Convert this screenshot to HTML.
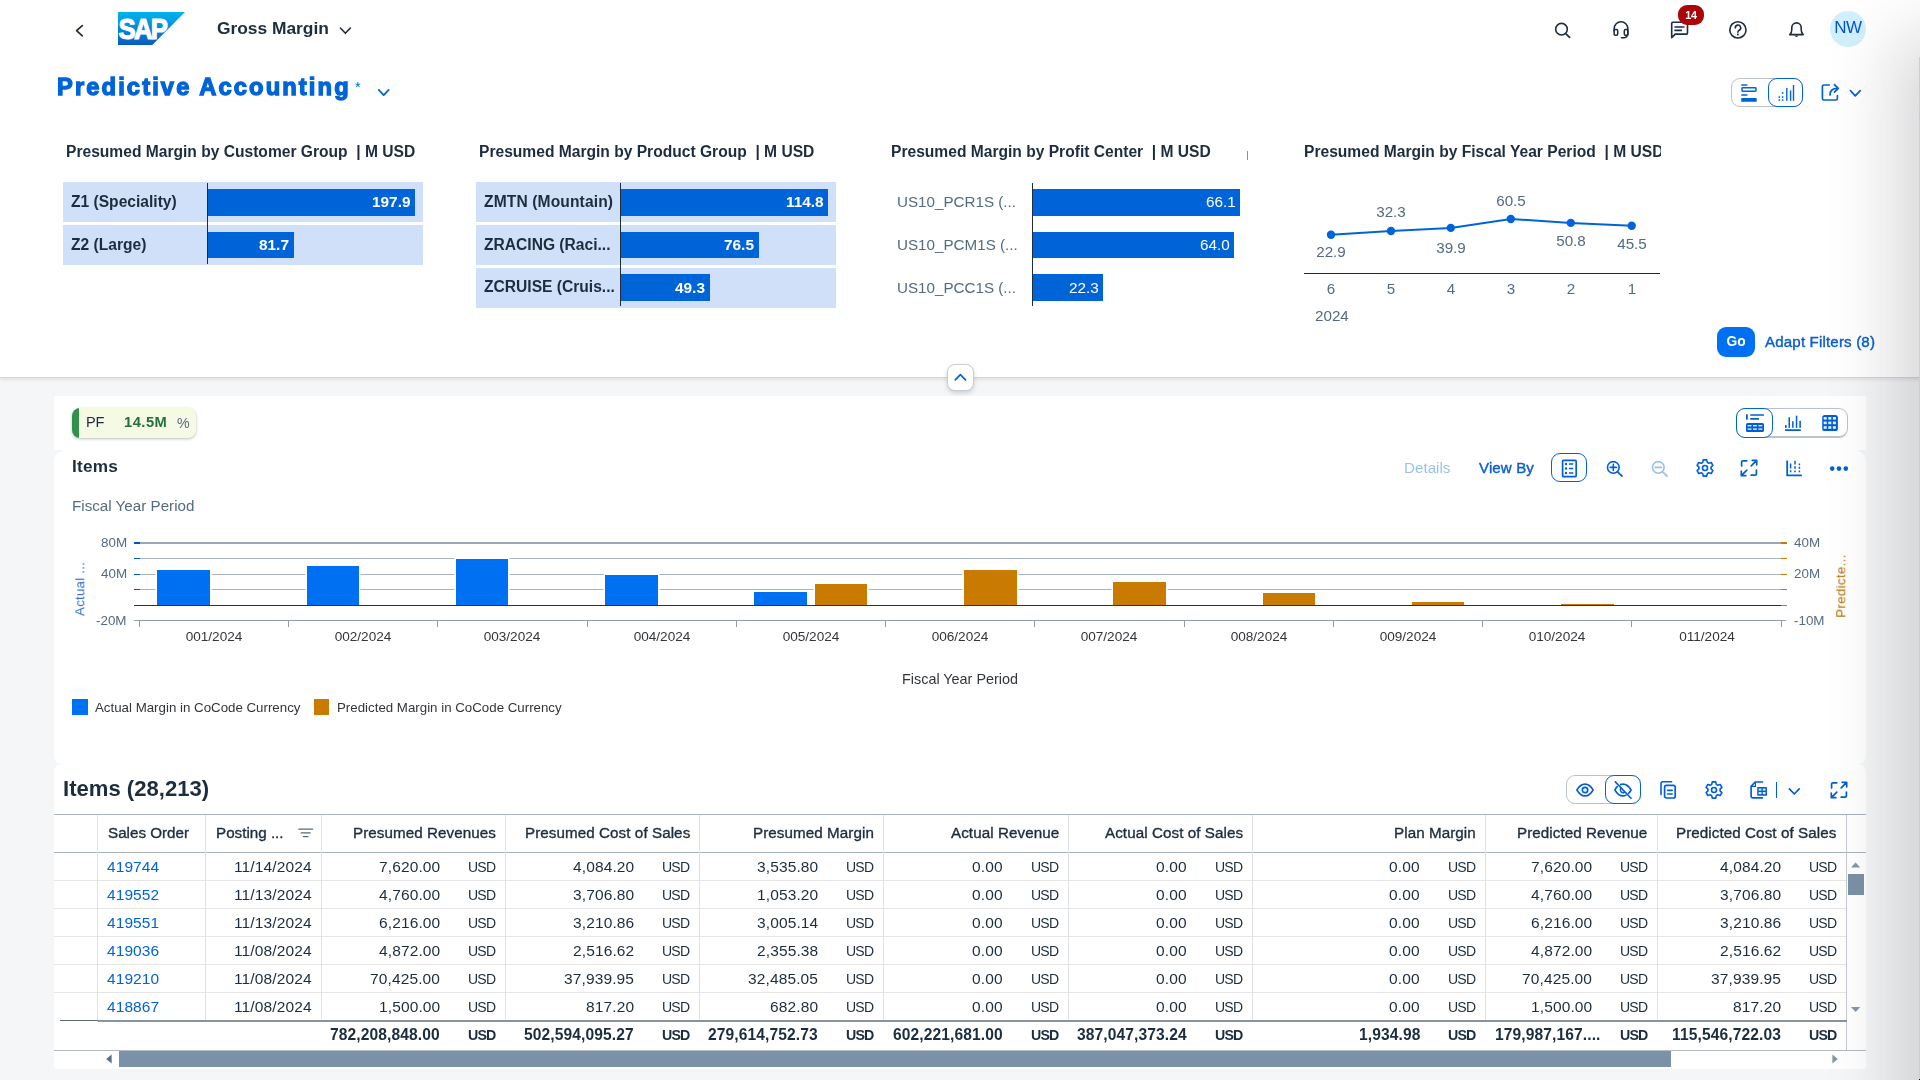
<!DOCTYPE html>
<html lang="en"><head><meta charset="utf-8"><title>Predictive Accounting</title>
<style>
*{box-sizing:border-box;margin:0;padding:0}
html,body{width:1920px;height:1080px;overflow:hidden;background:#f5f6f7;font-family:"Liberation Sans",sans-serif;color:#1d2d3e}
#root{position:relative;width:1920px;height:1080px;overflow:hidden;background:#f5f6f7}
.abs{position:absolute}
.t{position:absolute;white-space:pre;line-height:1;will-change:transform}
.b{font-weight:bold}
svg{position:absolute;overflow:visible}
.hdr{position:absolute;left:0;top:0;width:1920px;height:378px;background:#fff;border-bottom:1px solid #d3d6d9;box-shadow:0 2px 3px rgba(90,100,110,.13)}
.card{position:absolute;background:#fff}
.seg{position:absolute;border:1px solid #bcc3ca;border-radius:9px;background:#fff}
.sel{position:absolute;border:1px solid #0064d9;border-radius:9px;background:#fff}
.rowbg{position:absolute;background:#cfe0f8}
.bar{position:absolute;background:#0064d9}
.axis{position:absolute;background:#1d2d3e}
.mt{font-size:15.6px;font-weight:bold;color:#1d2d3e}
.lab{font-size:15.6px;font-weight:bold;color:#1d2d3e}
.labg{font-size:15.2px;color:#556b82}
.val{font-size:15.4px;font-weight:bold;color:#fff;text-align:right}
.valn{font-size:15.3px;color:#fff;text-align:right}
.g{color:#556b82}
</style></head>
<body><div id="root">
<div class="hdr"></div>
<svg style="left:72px;top:22px" width="16" height="16" viewBox="0 0 16 16"><path d="M10.3 3.6 L4.6 8.7 L10.3 13.8" fill="none" stroke="#1d2d3e" stroke-width="1.7" stroke-linecap="round" stroke-linejoin="round"/></svg>
<svg style="left:118px;top:12px" width="67" height="33" viewBox="0 0 67 33"><defs><linearGradient id="sapg" x1="0" y1="0" x2="0" y2="1"><stop offset="0" stop-color="#00b4f0"/><stop offset="0.25" stop-color="#019fe3"/><stop offset="1" stop-color="#0a5cbc"/></linearGradient></defs><polygon points="0,0 67,0 34.3,33 0,33" fill="url(#sapg)"/><text x="0.6" y="26.6" font-family="Liberation Sans" font-weight="bold" font-size="28.6" fill="#fff" stroke="#fff" stroke-width="1.1" textLength="47.5" lengthAdjust="spacingAndGlyphs" letter-spacing="-2">SAP</text></svg>
<div class="t b" style="left:217.40px;top:19.97px;font-size:17.4px;letter-spacing:-.02px">Gross Margin</div>
<svg style="left:338px;top:24px" width="14" height="14" viewBox="0 0 14 14"><path d="M2.4 4 L7.4 9.3 L12.4 4" fill="none" stroke="#1d2d3e" stroke-width="1.6" stroke-linecap="round" stroke-linejoin="round"/></svg>
<svg style="left:1553px;top:21px" width="18" height="18" viewBox="0 0 18 18"><circle cx="8.5" cy="8.2" r="5.8" fill="none" stroke="#1d2d3e" stroke-width="1.6"/><path d="M12.9 12.8 L16.6 16.4" stroke="#1d2d3e" stroke-width="1.7" stroke-linecap="round"/></svg>
<svg style="left:1612px;top:20px" width="18" height="20" viewBox="0 0 18 20"><path d="M2.2 11 V8.5 A6.8 6.8 0 0 1 15.8 8.5 V13.5 A4 4 0 0 1 11.8 17.8 H9.4" fill="none" stroke="#1d2d3e" stroke-width="1.6" stroke-linecap="round"/><rect x="2.1" y="9.6" width="3.6" height="5.6" rx="1.2" fill="none" stroke="#1d2d3e" stroke-width="1.5"/><rect x="12.3" y="9.6" width="3.6" height="5.6" rx="1.2" fill="none" stroke="#1d2d3e" stroke-width="1.5"/></svg>
<svg style="left:1670px;top:20px" width="20" height="20" viewBox="0 0 20 20"><path d="M1.7 17.6 V3.4 A1.2 1.2 0 0 1 2.9 2.2 H16.3 A1.2 1.2 0 0 1 17.5 3.4 V12.9 A1.2 1.2 0 0 1 16.3 14.1 H5.2 Z" fill="none" stroke="#1d2d3e" stroke-width="1.6" stroke-linejoin="round"/><path d="M5 7 H13.8 M5 10.4 H11.4" stroke="#1d2d3e" stroke-width="1.6" stroke-linecap="round"/></svg>
<div class="abs" style="left:1678px;top:5px;width:26px;height:20px;border-radius:9px;background:#aa0808"></div>
<div class="t b" style="left:1391.00px;width:600px;text-align:center;top:10.06px;font-size:10.8px;color:#fff;letter-spacing:-.2px">14</div>
<svg style="left:1728px;top:20px" width="20" height="20" viewBox="0 0 20 20"><circle cx="9.9" cy="9.9" r="8.1" fill="none" stroke="#1d2d3e" stroke-width="1.6"/><path d="M7.3 7.9 A2.7 2.7 0 1 1 11.2 10.2 C10.3 10.7 9.9 11.2 9.9 12.2" fill="none" stroke="#1d2d3e" stroke-width="1.6" stroke-linecap="round"/><circle cx="9.9" cy="14.6" r="1" fill="#1d2d3e"/></svg>
<svg style="left:1787px;top:20px" width="20" height="20" viewBox="0 0 20 20"><path d="M2.8 14.6 H16.2 C14.6 13.2 14.2 11.6 14.2 9.4 V7.6 A4.7 4.7 0 0 0 4.8 7.6 V9.4 C4.8 11.6 4.4 13.2 2.8 14.6 Z" fill="none" stroke="#1d2d3e" stroke-width="1.6" stroke-linejoin="round"/><path d="M7.6 15.6 A2 2 0 0 0 11.4 15.6 Z" fill="#1d2d3e"/></svg>
<div class="abs" style="left:1830px;top:11px;width:36px;height:36px;border-radius:18px;background:#d1efff"></div>
<div class="t " style="left:1548.30px;width:600px;text-align:center;top:19.41px;font-size:17px;color:#0057d2;letter-spacing:-.5px">NW</div>
<div class="t b" style="left:57.30px;top:76.24px;font-size:23.7px;color:#0064d9;letter-spacing:2.12px;-webkit-text-stroke:1.3px #0064d9">Predictive Accounting</div>
<div class="t " style="left:355.30px;top:80.33px;font-size:14.5px;color:#0064d9">*</div>
<svg style="left:376px;top:85px" width="16" height="16" viewBox="0 0 16 16"><path d="M2.7 4.8 L7.7 10.2 L12.7 4.8" fill="none" stroke="#0064d9" stroke-width="1.7" stroke-linecap="round" stroke-linejoin="round"/></svg>
<div class="seg" style="left:1731px;top:78px;width:72px;height:29px"></div>
<div class="sel" style="left:1768px;top:78px;width:35px;height:29px"></div>
<svg style="left:1741px;top:84px" width="16" height="18" viewBox="0 0 16 18"><rect x="0.2" y="0.2" width="6.3" height="1.6" rx=".5" fill="#0064d9"/><rect x="1" y="3.8" width="14" height="3.4" rx=".6" fill="none" stroke="#0064d9" stroke-width="1.5"/><rect x="0.2" y="10.2" width="6.3" height="1.6" rx=".5" fill="#0064d9"/><rect x="0.2" y="14.1" width="15.5" height="3.7" rx=".6" fill="#0064d9"/></svg>
<svg style="left:1778px;top:84px" width="17" height="18" viewBox="0 0 17 18"><rect x="8.1" y="3.9" width="1.4" height="12.9" fill="#0064d9"/><rect x="11.9" y="6.4" width="1.4" height="10.4" fill="#0064d9"/><rect x="14.8" y="1" width="1.4" height="15.8" fill="#0064d9"/><rect x="0.5" y="12.3" width="1.6" height="1.6" fill="#0064d9"/><rect x="0.5" y="15.2" width="1.6" height="1.6" fill="#0064d9"/><rect x="3.8" y="8.1" width="1.6" height="1.6" fill="#0064d9"/><rect x="3.8" y="12.3" width="1.6" height="1.6" fill="#0064d9"/><rect x="3.8" y="15.2" width="1.6" height="1.6" fill="#0064d9"/></svg>
<svg style="left:1821px;top:83px" width="20" height="19" viewBox="0 0 20 19"><path d="M8.2 2 H3 A1.6 1.6 0 0 0 1.4 3.6 V15.4 A1.6 1.6 0 0 0 3 17 H14.8 A1.6 1.6 0 0 0 16.4 15.4 V12.6" fill="none" stroke="#0064d9" stroke-width="1.7" stroke-linecap="round"/><path d="M9 12 C9 8 11.3 5.4 16.5 5.4 M13.4 1.6 L17.3 5.4 L13.4 9.2" fill="none" stroke="#0064d9" stroke-width="1.7" stroke-linecap="round" stroke-linejoin="round"/></svg>
<svg style="left:1848px;top:86px" width="15" height="14" viewBox="0 0 15 14"><path d="M2.4 4.6 L7.3 9.9 L12.2 4.6" fill="none" stroke="#0064d9" stroke-width="1.7" stroke-linecap="round" stroke-linejoin="round"/></svg>
<div class="t b" style="left:66.20px;top:143.79px;font-size:15.6px;letter-spacing:0px">Presumed Margin by Customer Group  | M USD</div>
<div class="rowbg" style="left:63px;top:182px;width:360px;height:40.2px;"></div>
<div class="bar" style="left:208px;top:188.8px;width:207px;height:26.8px;"></div>
<div class="t b" style="left:70.80px;top:193.79px;font-size:15.6px;">Z1 (Speciality)</div>
<div class="t b" style="right:1509.60px;top:193.96px;font-size:15.4px;color:#fff">197.9</div>
<div class="rowbg" style="left:63px;top:224.8px;width:360px;height:40.2px;"></div>
<div class="bar" style="left:208px;top:231.60000000000002px;width:86px;height:26.8px;"></div>
<div class="t b" style="left:70.80px;top:236.59px;font-size:15.6px;">Z2 (Large)</div>
<div class="t b" style="right:1630.60px;top:236.76px;font-size:15.4px;color:#fff">81.7</div>
<div class="axis" style="left:207px;top:182.5px;width:1px;height:81px;"></div>
<div class="t b" style="left:478.70px;top:143.79px;font-size:15.6px;">Presumed Margin by Product Group  | M USD</div>
<div class="rowbg" style="left:476px;top:182px;width:360px;height:40.2px;"></div>
<div class="bar" style="left:621px;top:188.8px;width:207px;height:26.8px;"></div>
<div class="t b" style="left:483.50px;top:193.79px;font-size:15.6px;letter-spacing:.12px">ZMTN (Mountain)</div>
<div class="t b" style="right:1096.60px;top:193.96px;font-size:15.4px;color:#fff">114.8</div>
<div class="rowbg" style="left:476px;top:224.8px;width:360px;height:40.2px;"></div>
<div class="bar" style="left:621px;top:231.60000000000002px;width:138px;height:26.8px;"></div>
<div class="t b" style="left:483.50px;top:236.59px;font-size:15.6px;">ZRACING (Raci...</div>
<div class="t b" style="right:1165.60px;top:236.76px;font-size:15.4px;color:#fff">76.5</div>
<div class="rowbg" style="left:476px;top:267.6px;width:360px;height:40.2px;"></div>
<div class="bar" style="left:621px;top:274.40000000000003px;width:89px;height:26.8px;"></div>
<div class="t b" style="left:483.50px;top:279.39px;font-size:15.6px;">ZCRUISE (Cruis...</div>
<div class="t b" style="right:1214.60px;top:279.56px;font-size:15.4px;color:#fff">49.3</div>
<div class="axis" style="left:620px;top:182.5px;width:1px;height:123px;"></div>
<div class="t b" style="left:891.40px;top:143.79px;font-size:15.6px;">Presumed Margin by Profit Center  | M USD</div>
<div class="abs" style="left:1247px;top:151px;width:1px;height:9px;background:#8c8aa8"></div>
<div class="bar" style="left:1033px;top:188.8px;width:207px;height:26.8px;"></div>
<div class="t g" style="left:896.70px;top:194.13px;font-size:15.2px;">US10_PCR1S (...</div>
<div class="t " style="right:684.40px;top:194.05px;font-size:15.3px;color:#fff">66.1</div>
<div class="bar" style="left:1033px;top:231.60000000000002px;width:201px;height:26.8px;"></div>
<div class="t g" style="left:896.70px;top:236.93px;font-size:15.2px;">US10_PCM1S (...</div>
<div class="t " style="right:690.40px;top:236.85px;font-size:15.3px;color:#fff">64.0</div>
<div class="bar" style="left:1033px;top:274.40000000000003px;width:70px;height:26.8px;"></div>
<div class="t g" style="left:896.70px;top:279.73px;font-size:15.2px;">US10_PCC1S (...</div>
<div class="t " style="right:821.40px;top:279.65px;font-size:15.3px;color:#fff">22.3</div>
<div class="axis" style="left:1032px;top:182.5px;width:1px;height:123px;"></div>
<div class="abs" style="left:1304px;top:140px;width:357px;height:24px;overflow:hidden"><div class="t b" style="left:0;top:3.79px;font-size:15.6px">Presumed Margin by Fiscal Year Period  | M USD</div></div>
<svg style="left:1300px;top:190px" width="370" height="60" viewBox="0 0 370 60"><polyline points="31.0,44.8 91.0,41.0 150.8,37.9 210.8,29.0 270.8,32.9 331.7,35.8" fill="none" stroke="#0064d9" stroke-width="2"/><circle cx="31.0" cy="44.8" r="4.2" fill="#0064d9"/><circle cx="91.0" cy="41.0" r="4.2" fill="#0064d9"/><circle cx="150.8" cy="37.9" r="4.2" fill="#0064d9"/><circle cx="210.8" cy="29.0" r="4.2" fill="#0064d9"/><circle cx="270.8" cy="32.9" r="4.2" fill="#0064d9"/><circle cx="331.7" cy="35.8" r="4.2" fill="#0064d9"/></svg>
<div class="t g" style="left:1031.00px;width:600px;text-align:center;top:244.33px;font-size:15.2px;">22.9</div>
<div class="t g" style="left:1091.30px;width:600px;text-align:center;top:203.53px;font-size:15.2px;">32.3</div>
<div class="t g" style="left:1151.00px;width:600px;text-align:center;top:239.73px;font-size:15.2px;">39.9</div>
<div class="t g" style="left:1211.30px;width:600px;text-align:center;top:193.03px;font-size:15.2px;">60.5</div>
<div class="t g" style="left:1271.40px;width:600px;text-align:center;top:232.93px;font-size:15.2px;">50.8</div>
<div class="t g" style="left:1332.00px;width:600px;text-align:center;top:235.53px;font-size:15.2px;">45.5</div>
<div class="axis" style="left:1304px;top:272.8px;width:356px;height:1.1px;"></div>
<div class="t g" style="left:1031.00px;width:600px;text-align:center;top:281.43px;font-size:15.2px;">6</div>
<div class="t g" style="left:1091.00px;width:600px;text-align:center;top:281.43px;font-size:15.2px;">5</div>
<div class="t g" style="left:1151.00px;width:600px;text-align:center;top:281.43px;font-size:15.2px;">4</div>
<div class="t g" style="left:1211.00px;width:600px;text-align:center;top:281.43px;font-size:15.2px;">3</div>
<div class="t g" style="left:1271.00px;width:600px;text-align:center;top:281.43px;font-size:15.2px;">2</div>
<div class="t g" style="left:1331.50px;width:600px;text-align:center;top:281.43px;font-size:15.2px;">1</div>
<div class="t g" style="left:1315.00px;top:308.43px;font-size:15.2px;">2024</div>
<div class="abs" style="left:1717px;top:327px;width:38px;height:30px;border-radius:9px;background:#0070f2"></div>
<div class="t b" style="left:1436.30px;width:600px;text-align:center;top:335.32px;font-size:13.8px;color:#fff">Go</div>
<div class="t " style="left:1764.90px;top:334.12px;font-size:15.1px;color:#0a5fd0;letter-spacing:.16px;-webkit-text-stroke:.4px #0a5fd0">Adapt Filters (8)</div>
<div class="abs" style="left:947px;top:364px;width:26.5px;height:26.5px;border-radius:8px;background:#fff;border:1px solid #c9ced3;box-shadow:0 2px 4px rgba(80,90,100,.25)"></div>
<svg style="left:952px;top:370px" width="16" height="14" viewBox="0 0 16 14"><path d="M3.3 9.8 L8.4 4.6 L13.5 9.8" fill="none" stroke="#0064d9" stroke-width="1.7" stroke-linecap="round" stroke-linejoin="round"/></svg>
<div class="card" style="left:54px;top:396px;width:1812px;height:54px"></div>
<div class="card" style="left:54px;top:450px;width:1812px;height:314px;border-radius:12px 12px 8px 8px"></div>
<div class="abs" style="left:72px;top:408px;width:124px;height:30px;border-radius:8px;background:#f5fae5;box-shadow:0 1px 3px rgba(60,70,60,.35);overflow:hidden"><div class="abs" style="left:0;top:0;width:7px;height:30px;background:#30914c"></div></div>
<div class="t " style="left:86.00px;top:415.24px;font-size:14.6px;color:#1d2d3e;letter-spacing:-.3px">PF</div>
<div class="t b" style="left:123.50px;top:415.06px;font-size:14.7px;color:#256f3a;letter-spacing:.5px">14.5M</div>
<div class="t g" style="left:176.50px;top:415.58px;font-size:14.2px;">%</div>
<div class="seg" style="left:1736px;top:408px;width:112px;height:29.5px;border-bottom-width:2px"></div>
<div class="sel" style="left:1736px;top:408px;width:37px;height:29.5px"></div>
<svg style="left:1746px;top:414px" width="18" height="18" viewBox="0 0 18 18"><rect x="0" y="0.2" width="1.8" height="5.5" rx=".4" fill="#005fd2"/><rect x="4.2" y="0.2" width="13.8" height="1.6" rx=".5" fill="#005fd2"/><rect x="4.2" y="4.1" width="8.8" height="1.6" rx=".5" fill="#005fd2"/><rect x="0" y="9" width="18" height="9" rx="1.6" fill="#005fd2"/><g fill="#d9ecff"><rect x="1.6" y="11" width="3.9" height="1.4"/><rect x="7" y="11" width="3.9" height="1.4"/><rect x="12.4" y="11" width="3.9" height="1.4"/><rect x="1.6" y="14.4" width="3.9" height="1.4"/><rect x="7" y="14.4" width="3.9" height="1.4"/><rect x="12.4" y="14.4" width="3.9" height="1.4"/></g></svg>
<svg style="left:1785px;top:415px" width="16" height="17" viewBox="0 0 16 17"><rect x="0" y="10.2" width="1.7" height="2.6" fill="#005fd2"/><rect x="3.5" y="2.2" width="1.5" height="10.6" fill="#005fd2"/><rect x="7.1" y="6.2" width="1.5" height="6.6" fill="#005fd2"/><rect x="10.8" y="0.7" width="1.5" height="12.1" fill="#005fd2"/><rect x="14.3" y="5.8" width="1.6" height="7" fill="#005fd2"/><rect x="0" y="14.2" width="15.9" height="1.8" rx=".4" fill="#005fd2"/></svg>
<svg style="left:1822px;top:415px" width="16" height="16" viewBox="0 0 16 16"><rect x="0.2" y="0" width="15.7" height="16" rx="2.6" fill="#005fd2"/><g fill="#e3f1ff"><rect x="1.7" y="2.0" width="3" height="2.6"/><rect x="1.7" y="6.6" width="3" height="2.6"/><rect x="1.7" y="11.2" width="3" height="2.6"/><rect x="6.3" y="2.0" width="3" height="2.6"/><rect x="6.3" y="6.6" width="3" height="2.6"/><rect x="6.3" y="11.2" width="3" height="2.6"/><rect x="10.9" y="2.0" width="3" height="2.6"/><rect x="10.9" y="6.6" width="3" height="2.6"/><rect x="10.9" y="11.2" width="3" height="2.6"/></g></svg>
<div class="t b" style="left:72.30px;top:458.24px;font-size:17.2px;letter-spacing:.25px">Items</div>
<div class="t g" style="left:72.30px;top:497.73px;font-size:15.2px;">Fiscal Year Period</div>
<div class="t " style="left:1404.00px;top:460.33px;font-size:15.2px;color:#0064d9;opacity:.4">Details</div>
<div class="t " style="left:1478.60px;top:460.42px;font-size:15.1px;color:#0a5fd0;letter-spacing:.1px;-webkit-text-stroke:.4px #0a5fd0">View By</div>
<div class="sel" style="left:1551px;top:453px;width:36px;height:28.5px"></div>
<svg style="left:1561px;top:458.5px" width="17" height="19" viewBox="0 0 17 19"><rect x="1.6" y="1.4" width="13.6" height="16.2" rx="1" fill="none" stroke="#005fd2" stroke-width="1.7"/><circle cx="5" cy="5" r="1.2" fill="#005fd2"/><rect x="7.9" y="4.2" width="4.4" height="1.6" rx=".3" fill="#005fd2"/><circle cx="5" cy="9.5" r="1.2" fill="#005fd2"/><rect x="7.9" y="8.7" width="4.4" height="1.6" rx=".3" fill="#005fd2"/><circle cx="5" cy="14" r="1.2" fill="#005fd2"/><rect x="7.9" y="13.2" width="4.4" height="1.6" rx=".3" fill="#005fd2"/></svg>
<svg style="left:1606px;top:459.5px" width="18" height="18" viewBox="0 0 18 18"><circle cx="7.3" cy="7.4" r="5.8" fill="none" stroke="#005fd2" stroke-width="1.6"/><path d="M11.6 11.8 L16 16.1" stroke="#005fd2" stroke-width="1.7" stroke-linecap="round"/><path d="M4.2 7.4 H10.4 M7.3 4.3 V10.5" stroke="#005fd2" stroke-width="1.6" stroke-linecap="round"/></svg>
<svg style="left:1651px;top:459.5px;opacity:.4" width="18" height="18" viewBox="0 0 18 18"><circle cx="7.3" cy="7.4" r="5.8" fill="none" stroke="#005fd2" stroke-width="1.6"/><path d="M11.6 11.8 L16 16.1" stroke="#005fd2" stroke-width="1.7" stroke-linecap="round"/><path d="M4.2 7.4 H10.4" stroke="#005fd2" stroke-width="1.6" stroke-linecap="round"/></svg>
<svg style="left:1695.7px;top:459px" width="18" height="18" viewBox="0 0 18 18"><path d="M6.71 3.34 L7.27 0.88 L10.73 0.88 L11.29 3.34 L12.76 4.19 L15.17 3.45 L16.89 6.44 L15.04 8.15 L15.04 9.85 L16.89 11.56 L15.17 14.55 L12.76 13.81 L11.29 14.66 L10.73 17.12 L7.27 17.12 L6.71 14.66 L5.24 13.81 L2.83 14.55 L1.11 11.56 L2.96 9.85 L2.96 8.15 L1.11 6.44 L2.83 3.45 L5.24 4.19 Z" fill="none" stroke="#005fd2" stroke-width="1.6" stroke-linejoin="round"/><circle cx="9" cy="9" r="2.5" fill="none" stroke="#005fd2" stroke-width="1.6"/></svg>
<svg style="left:1740px;top:459px" width="18" height="18" viewBox="0 0 18 18"><path d="M1.6 7 V3.2 A1.4 1.4 0 0 1 3 1.8 H6.8 M16.4 11 V14.8 A1.4 1.4 0 0 1 15 16.2 H11.2" fill="none" stroke="#005fd2" stroke-width="1.7" stroke-linecap="round"/><path d="M11.2 6.8 L16.4 1.6 M12.2 1.3 H16.7 V5.8 M6.8 11.2 L1.6 16.4 M1.3 12.2 V16.7 H5.8" fill="none" stroke="#005fd2" stroke-width="1.7" stroke-linecap="round" stroke-linejoin="round"/></svg>
<svg style="left:1786px;top:459.5px" width="17" height="17" viewBox="0 0 17 17"><path d="M1.2 0.6 V15.4 H15.8" fill="none" stroke="#005fd2" stroke-width="1.8"/><g stroke="#005fd2" stroke-width="1.5"><path d="M4.6 3.6 V8.4 M4.6 10.2 V12.2"/><path d="M9 0.8 V4.4 M9 6.2 V8.8 M9 10.4 V12.2"/><path d="M13.4 3.6 V5.2 M13.4 6.8 V8.8 M13.4 10.4 V12.2"/></g></svg>
<svg style="left:1829px;top:465px" width="20" height="8" viewBox="0 0 20 8"><circle cx="3.2" cy="3.6" r="2.3" fill="#005fd2"/><circle cx="10" cy="3.6" r="2.3" fill="#005fd2"/><circle cx="16.8" cy="3.6" r="2.3" fill="#005fd2"/></svg>
<div class="abs" style="left:134px;top:542px;width:1652.7px;height:2px;background:#9aa7b5"></div>
<div class="abs" style="left:134px;top:558.0px;width:1647.2px;height:1px;background:#a9b4be"></div>
<div class="abs" style="left:134px;top:573.5px;width:1647.2px;height:1px;background:#a9b4be"></div>
<div class="abs" style="left:134px;top:589.0px;width:1647.2px;height:1px;background:#a9b4be"></div>
<div class="abs" style="left:134px;top:620px;width:1652.2px;height:1px;background:#8f9dac"></div>
<div class="abs" style="left:134px;top:542.0px;width:5.5px;height:2px;background:#0057c2"></div>
<div class="abs" style="left:1781px;top:542.0px;width:6px;height:2px;background:#c87b00"></div>
<div class="abs" style="left:134px;top:558.0px;width:5.5px;height:1px;background:#0057c2"></div>
<div class="abs" style="left:1781px;top:558.0px;width:6px;height:1px;background:#c87b00"></div>
<div class="abs" style="left:134px;top:573.5px;width:5.5px;height:1px;background:#0057c2"></div>
<div class="abs" style="left:1781px;top:573.5px;width:6px;height:1px;background:#c87b00"></div>
<div class="abs" style="left:134px;top:589.0px;width:5.5px;height:1px;background:#0057c2"></div>
<div class="abs" style="left:1781px;top:589.0px;width:6px;height:1px;background:#c87b00"></div>
<div class="abs" style="left:134px;top:604.5px;width:5.5px;height:1px;background:#0057c2"></div>
<div class="abs" style="left:1781px;top:604.5px;width:6px;height:1px;background:#c87b00"></div>
<div class="abs" style="left:138.7px;top:620px;width:1px;height:7px;background:#8f9dac"></div>
<div class="abs" style="left:287.9727272727273px;top:620px;width:1px;height:7px;background:#8f9dac"></div>
<div class="abs" style="left:437.24545454545455px;top:620px;width:1px;height:7px;background:#8f9dac"></div>
<div class="abs" style="left:586.5181818181818px;top:620px;width:1px;height:7px;background:#8f9dac"></div>
<div class="abs" style="left:735.790909090909px;top:620px;width:1px;height:7px;background:#8f9dac"></div>
<div class="abs" style="left:885.0636363636363px;top:620px;width:1px;height:7px;background:#8f9dac"></div>
<div class="abs" style="left:1034.3363636363638px;top:620px;width:1px;height:7px;background:#8f9dac"></div>
<div class="abs" style="left:1183.609090909091px;top:620px;width:1px;height:7px;background:#8f9dac"></div>
<div class="abs" style="left:1332.8818181818183px;top:620px;width:1px;height:7px;background:#8f9dac"></div>
<div class="abs" style="left:1482.1545454545455px;top:620px;width:1px;height:7px;background:#8f9dac"></div>
<div class="abs" style="left:1631.4272727272728px;top:620px;width:1px;height:7px;background:#8f9dac"></div>
<div class="abs" style="left:1780.7px;top:620px;width:1px;height:7px;background:#8f9dac"></div>
<div class="abs" style="left:157.2px;top:570px;width:52.7px;height:34.60000000000002px;background:#0070f2;box-shadow:0 0 0 1.5px #fff"></div>
<div class="abs" style="left:306.5px;top:566px;width:52.7px;height:38.60000000000002px;background:#0070f2;box-shadow:0 0 0 1.5px #fff"></div>
<div class="abs" style="left:455.7px;top:559px;width:52.7px;height:45.60000000000002px;background:#0070f2;box-shadow:0 0 0 1.5px #fff"></div>
<div class="abs" style="left:605.0px;top:575px;width:52.7px;height:29.600000000000023px;background:#0070f2;box-shadow:0 0 0 1.5px #fff"></div>
<div class="abs" style="left:754.3px;top:592px;width:52.7px;height:12.600000000000023px;background:#0070f2;box-shadow:0 0 0 1.5px #fff"></div>
<div class="abs" style="left:814.8px;top:584px;width:52.5px;height:20.600000000000023px;background:#c87b00;box-shadow:0 0 0 1.5px #fff"></div>
<div class="abs" style="left:964.1px;top:570px;width:52.5px;height:34.60000000000002px;background:#c87b00;box-shadow:0 0 0 1.5px #fff"></div>
<div class="abs" style="left:1113.3px;top:582px;width:52.5px;height:22.600000000000023px;background:#c87b00;box-shadow:0 0 0 1.5px #fff"></div>
<div class="abs" style="left:1262.6px;top:593px;width:52.5px;height:11.600000000000023px;background:#c87b00;box-shadow:0 0 0 1.5px #fff"></div>
<div class="abs" style="left:1411.9px;top:601.5px;width:52.5px;height:3.1000000000000227px;background:#c87b00;box-shadow:0 0 0 1.5px #fff"></div>
<div class="abs" style="left:1561.2px;top:603.7px;width:52.5px;height:0.8999999999999773px;background:#c87b00;box-shadow:0 0 0 1.5px #fff"></div>
<div class="abs" style="left:134px;top:604.5px;width:1647.2px;height:1.2px;background:#2b3138"></div>
<div class="abs" style="left:1781px;top:604.5px;width:6px;height:1px;background:#c87b00"></div>
<div class="t g" style="right:1793.20px;top:536.06px;font-size:13.4px;">80M</div>
<div class="t g" style="right:1793.20px;top:567.06px;font-size:13.4px;">40M</div>
<div class="t g" style="right:1793.20px;top:613.56px;font-size:13.4px;">-20M</div>
<div class="t g" style="left:1793.60px;top:536.06px;font-size:13.4px;">40M</div>
<div class="t g" style="left:1793.60px;top:567.06px;font-size:13.4px;">20M</div>
<div class="t g" style="left:1793.60px;top:613.56px;font-size:13.4px;">-10M</div>
<div class="t" style="left:79.5px;top:588.5px;font-size:13.4px;color:#2f6fd0;transform:translate(-50%,-50%) rotate(-90deg);letter-spacing:.2px">Actual ...</div>
<div class="t" style="left:1840.5px;top:585.8px;font-size:13.4px;color:#b56f00;transform:translate(-50%,-50%) rotate(-90deg);letter-spacing:.3px">Predicte...</div>
<div class="t " style="left:-86.16px;width:600px;text-align:center;top:629.99px;font-size:13.6px;color:#32363a">001/2024</div>
<div class="t " style="left:63.11px;width:600px;text-align:center;top:629.99px;font-size:13.6px;color:#32363a">002/2024</div>
<div class="t " style="left:212.38px;width:600px;text-align:center;top:629.99px;font-size:13.6px;color:#32363a">003/2024</div>
<div class="t " style="left:361.65px;width:600px;text-align:center;top:629.99px;font-size:13.6px;color:#32363a">004/2024</div>
<div class="t " style="left:510.93px;width:600px;text-align:center;top:629.99px;font-size:13.6px;color:#32363a">005/2024</div>
<div class="t " style="left:660.20px;width:600px;text-align:center;top:629.99px;font-size:13.6px;color:#32363a">006/2024</div>
<div class="t " style="left:809.47px;width:600px;text-align:center;top:629.99px;font-size:13.6px;color:#32363a">007/2024</div>
<div class="t " style="left:958.75px;width:600px;text-align:center;top:629.99px;font-size:13.6px;color:#32363a">008/2024</div>
<div class="t " style="left:1108.02px;width:600px;text-align:center;top:629.99px;font-size:13.6px;color:#32363a">009/2024</div>
<div class="t " style="left:1257.29px;width:600px;text-align:center;top:629.99px;font-size:13.6px;color:#32363a">010/2024</div>
<div class="t " style="left:1406.56px;width:600px;text-align:center;top:629.99px;font-size:13.6px;color:#32363a">011/2024</div>
<div class="t " style="left:660.00px;width:600px;text-align:center;top:671.81px;font-size:14.4px;color:#32363a">Fiscal Year Period</div>
<div class="abs" style="left:72px;top:699.4px;width:15.7px;height:15.7px;background:#0070f2"></div>
<div class="t " style="left:95.00px;top:701.04px;font-size:13.3px;color:#32363a">Actual Margin in CoCode Currency</div>
<div class="abs" style="left:313.8px;top:699.4px;width:15.7px;height:15.7px;background:#c87b00"></div>
<div class="t " style="left:337.00px;top:701.04px;font-size:13.3px;color:#32363a">Predicted Margin in CoCode Currency</div>
<div class="card" style="left:54px;top:764px;width:1812px;height:304.8px;border-radius:8px 8px 2px 2px"></div>
<div class="t b" style="left:63.40px;top:777.59px;font-size:22.1px;">Items (28,213)</div>
<div class="seg" style="left:1566px;top:775px;width:75px;height:29px"></div>
<div class="sel" style="left:1605px;top:775px;width:36px;height:29px"></div>
<svg style="left:1576px;top:783px" width="18" height="14" viewBox="0 0 18 14"><path d="M0.9 7 C3.2 3 6 1.1 9 1.1 C12 1.1 14.8 3 17.1 7 C14.8 11 12 12.9 9 12.9 C6 12.9 3.2 11 0.9 7 Z" fill="none" stroke="#005fd2" stroke-width="1.6" stroke-linejoin="round"/><circle cx="9" cy="7" r="2.7" fill="none" stroke="#005fd2" stroke-width="1.7"/></svg>
<svg style="left:1614px;top:781px" width="18" height="18" viewBox="0 0 18 18"><path d="M3.2 5.6 C2.3 6.5 1.5 7.6 0.9 9 C3.2 13 6 14.9 9 14.9 C10 14.9 11 14.7 11.9 14.3 M6.6 3.6 C7.4 3.3 8.2 3.1 9 3.1 C12 3.1 14.8 5 17.1 9 C16.3 10.4 15.5 11.5 14.6 12.4" fill="none" stroke="#005fd2" stroke-width="1.6" stroke-linecap="round" stroke-linejoin="round"/><path d="M6.6 7.6 A2.8 2.8 0 0 0 10.2 11.4" fill="none" stroke="#005fd2" stroke-width="1.6" stroke-linecap="round"/><path d="M1.3 0.9 L17 17.2" stroke="#005fd2" stroke-width="1.6" stroke-linecap="round"/></svg>
<svg style="left:1660px;top:781px" width="17" height="18" viewBox="0 0 17 18"><path d="M1 13.6 V2.6 A1.8 1.8 0 0 1 2.8 0.8 H11.6" fill="none" stroke="#005fd2" stroke-width="1.6" stroke-linecap="round"/><rect x="4.6" y="4.4" width="10.6" height="12.6" rx="1.8" fill="none" stroke="#005fd2" stroke-width="1.7"/><path d="M7.6 9.4 H12.2 M7.6 13 H12.2" stroke="#005fd2" stroke-width="1.6" stroke-linecap="round"/></svg>
<svg style="left:1704.8px;top:781px" width="18" height="18" viewBox="0 0 18 18"><path d="M6.71 3.34 L7.27 0.88 L10.73 0.88 L11.29 3.34 L12.76 4.19 L15.17 3.45 L16.89 6.44 L15.04 8.15 L15.04 9.85 L16.89 11.56 L15.17 14.55 L12.76 13.81 L11.29 14.66 L10.73 17.12 L7.27 17.12 L6.71 14.66 L5.24 13.81 L2.83 14.55 L1.11 11.56 L2.96 9.85 L2.96 8.15 L1.11 6.44 L2.83 3.45 L5.24 4.19 Z" fill="none" stroke="#005fd2" stroke-width="1.6" stroke-linejoin="round"/><circle cx="9" cy="9" r="2.5" fill="none" stroke="#005fd2" stroke-width="1.6"/></svg>
<svg style="left:1749.5px;top:781px" width="18" height="18" viewBox="0 0 18 18"><path d="M12.4 1 H5.2 L1.1 5.3 V15.2 A1.6 1.6 0 0 0 2.7 16.8 H12.4" fill="none" stroke="#005fd2" stroke-width="1.7" stroke-linecap="round" stroke-linejoin="round"/><path d="M5.4 1.2 V5.4 H1.4" fill="none" stroke="#005fd2" stroke-width="1.2"/><rect x="7.2" y="6" width="9.8" height="8.8" rx=".8" fill="#005fd2"/><g fill="#e3f1ff"><rect x="8.7" y="7.6" width="2.7" height="2"/><rect x="12.8" y="7.6" width="2.7" height="2"/><rect x="8.7" y="11" width="2.7" height="2.2"/><rect x="12.8" y="11" width="2.7" height="2.2"/></g></svg>
<div class="abs" style="left:1776px;top:782px;width:1px;height:16px;background:#005fd2"></div>
<svg style="left:1787px;top:784px" width="15" height="14" viewBox="0 0 15 14"><path d="M2.4 4.8 L7.3 10 L12.2 4.8" fill="none" stroke="#005fd2" stroke-width="1.7" stroke-linecap="round" stroke-linejoin="round"/></svg>
<svg style="left:1830.2px;top:781px" width="18" height="18" viewBox="0 0 18 18"><path d="M1.6 7 V3.2 A1.4 1.4 0 0 1 3 1.8 H6.8 M16.4 11 V14.8 A1.4 1.4 0 0 1 15 16.2 H11.2" fill="none" stroke="#005fd2" stroke-width="1.7" stroke-linecap="round"/><path d="M11.2 6.8 L16.4 1.6 M12.2 1.3 H16.7 V5.8 M6.8 11.2 L1.6 16.4 M1.3 12.2 V16.7 H5.8" fill="none" stroke="#005fd2" stroke-width="1.7" stroke-linecap="round" stroke-linejoin="round"/></svg>
<div class="abs" style="left:54px;top:814px;width:1812px;height:1px;background:#a8b3bd"></div>
<div class="abs" style="left:54px;top:852px;width:1812px;height:1px;background:#a8b3bd"></div>
<div class="abs" style="left:54px;top:880px;width:1793px;height:1px;background:#e5e5e5"></div>
<div class="abs" style="left:54px;top:908px;width:1793px;height:1px;background:#e5e5e5"></div>
<div class="abs" style="left:54px;top:936px;width:1793px;height:1px;background:#e5e5e5"></div>
<div class="abs" style="left:54px;top:964px;width:1793px;height:1px;background:#e5e5e5"></div>
<div class="abs" style="left:54px;top:992px;width:1793px;height:1px;background:#e5e5e5"></div>
<div class="abs" style="left:97px;top:815px;width:1px;height:205px;background:#e0e3e6"></div>
<div class="abs" style="left:205px;top:815px;width:1px;height:205px;background:#e0e3e6"></div>
<div class="abs" style="left:321px;top:815px;width:1px;height:205px;background:#e0e3e6"></div>
<div class="abs" style="left:505px;top:815px;width:1px;height:205px;background:#e0e3e6"></div>
<div class="abs" style="left:699px;top:815px;width:1px;height:205px;background:#e0e3e6"></div>
<div class="abs" style="left:883px;top:815px;width:1px;height:205px;background:#e0e3e6"></div>
<div class="abs" style="left:1068px;top:815px;width:1px;height:205px;background:#e0e3e6"></div>
<div class="abs" style="left:1252px;top:815px;width:1px;height:205px;background:#e0e3e6"></div>
<div class="abs" style="left:1485px;top:815px;width:1px;height:205px;background:#e0e3e6"></div>
<div class="abs" style="left:1657px;top:815px;width:1px;height:205px;background:#e0e3e6"></div>
<div class="abs" style="left:1846px;top:815px;width:1px;height:235px;background:#c6cbd1"></div>
<div class="abs" style="left:60px;top:1020px;width:38px;height:1px;background:#5d6b79"></div>
<div class="abs" style="left:98px;top:1019.5px;width:1749px;height:2px;background:#8a949e"></div>
<div class="abs" style="left:54px;top:1050px;width:1812px;height:1px;background:#b3b9c0"></div>
<div class="t " style="left:107.50px;top:825.43px;font-size:15.2px;-webkit-text-stroke:.35px #1d2d3e;">Sales Order</div>
<div class="t " style="left:215.50px;top:825.43px;font-size:15.2px;-webkit-text-stroke:.35px #1d2d3e;">Posting ...</div>
<div class="t " style="right:1424.20px;top:825.43px;font-size:15.2px;-webkit-text-stroke:.35px #1d2d3e;letter-spacing:.07px;">Presumed Revenues</div>
<div class="t " style="right:1230.20px;top:825.43px;font-size:15.2px;-webkit-text-stroke:.35px #1d2d3e;letter-spacing:.07px;">Presumed Cost of Sales</div>
<div class="t " style="right:1046.20px;top:825.43px;font-size:15.2px;-webkit-text-stroke:.35px #1d2d3e;letter-spacing:.07px;">Presumed Margin</div>
<div class="t " style="right:861.20px;top:825.43px;font-size:15.2px;-webkit-text-stroke:.35px #1d2d3e;letter-spacing:.07px;">Actual Revenue</div>
<div class="t " style="right:677.20px;top:825.43px;font-size:15.2px;-webkit-text-stroke:.35px #1d2d3e;letter-spacing:.07px;">Actual Cost of Sales</div>
<div class="t " style="right:444.20px;top:825.43px;font-size:15.2px;-webkit-text-stroke:.35px #1d2d3e;letter-spacing:.07px;">Plan Margin</div>
<div class="t " style="right:272.20px;top:825.43px;font-size:15.2px;-webkit-text-stroke:.35px #1d2d3e;letter-spacing:.07px;">Predicted Revenue</div>
<div class="t " style="right:83.20px;top:825.43px;font-size:15.2px;-webkit-text-stroke:.35px #1d2d3e;letter-spacing:.07px;">Predicted Cost of Sales</div>
<svg style="left:298px;top:828px" width="16" height="10" viewBox="0 0 16 10"><path d="M0.8 1.2 H14.6 M3.2 4.9 H12.2 M5.4 8.6 H10" stroke="#556b82" stroke-width="1.2" stroke-linecap="round"/></svg>
<div class="t " style="left:107.30px;top:858.88px;font-size:15.5px;color:#0064d9;letter-spacing:.08px">419744</div>
<div class="t " style="right:1608.30px;top:858.88px;font-size:15.5px;letter-spacing:.13px">11/14/2024</div>
<div class="t " style="right:1479.90px;top:858.88px;font-size:15.5px;letter-spacing:.12px">7,620.00</div>
<div class="t " style="right:1424.60px;top:860.15px;font-size:14px;letter-spacing:-.75px">USD</div>
<div class="t " style="right:1285.90px;top:858.88px;font-size:15.5px;letter-spacing:.12px">4,084.20</div>
<div class="t " style="right:1230.60px;top:860.15px;font-size:14px;letter-spacing:-.75px">USD</div>
<div class="t " style="right:1101.90px;top:858.88px;font-size:15.5px;letter-spacing:.12px">3,535.80</div>
<div class="t " style="right:1046.60px;top:860.15px;font-size:14px;letter-spacing:-.75px">USD</div>
<div class="t " style="right:916.90px;top:858.88px;font-size:15.5px;letter-spacing:.12px">0.00</div>
<div class="t " style="right:861.60px;top:860.15px;font-size:14px;letter-spacing:-.75px">USD</div>
<div class="t " style="right:732.90px;top:858.88px;font-size:15.5px;letter-spacing:.12px">0.00</div>
<div class="t " style="right:677.60px;top:860.15px;font-size:14px;letter-spacing:-.75px">USD</div>
<div class="t " style="right:499.90px;top:858.88px;font-size:15.5px;letter-spacing:.12px">0.00</div>
<div class="t " style="right:444.60px;top:860.15px;font-size:14px;letter-spacing:-.75px">USD</div>
<div class="t " style="right:327.90px;top:858.88px;font-size:15.5px;letter-spacing:.12px">7,620.00</div>
<div class="t " style="right:272.60px;top:860.15px;font-size:14px;letter-spacing:-.75px">USD</div>
<div class="t " style="right:138.90px;top:858.88px;font-size:15.5px;letter-spacing:.12px">4,084.20</div>
<div class="t " style="right:83.60px;top:860.15px;font-size:14px;letter-spacing:-.75px">USD</div>
<div class="t " style="left:107.30px;top:886.88px;font-size:15.5px;color:#0064d9;letter-spacing:.08px">419552</div>
<div class="t " style="right:1608.30px;top:886.88px;font-size:15.5px;letter-spacing:.13px">11/13/2024</div>
<div class="t " style="right:1479.90px;top:886.88px;font-size:15.5px;letter-spacing:.12px">4,760.00</div>
<div class="t " style="right:1424.60px;top:888.15px;font-size:14px;letter-spacing:-.75px">USD</div>
<div class="t " style="right:1285.90px;top:886.88px;font-size:15.5px;letter-spacing:.12px">3,706.80</div>
<div class="t " style="right:1230.60px;top:888.15px;font-size:14px;letter-spacing:-.75px">USD</div>
<div class="t " style="right:1101.90px;top:886.88px;font-size:15.5px;letter-spacing:.12px">1,053.20</div>
<div class="t " style="right:1046.60px;top:888.15px;font-size:14px;letter-spacing:-.75px">USD</div>
<div class="t " style="right:916.90px;top:886.88px;font-size:15.5px;letter-spacing:.12px">0.00</div>
<div class="t " style="right:861.60px;top:888.15px;font-size:14px;letter-spacing:-.75px">USD</div>
<div class="t " style="right:732.90px;top:886.88px;font-size:15.5px;letter-spacing:.12px">0.00</div>
<div class="t " style="right:677.60px;top:888.15px;font-size:14px;letter-spacing:-.75px">USD</div>
<div class="t " style="right:499.90px;top:886.88px;font-size:15.5px;letter-spacing:.12px">0.00</div>
<div class="t " style="right:444.60px;top:888.15px;font-size:14px;letter-spacing:-.75px">USD</div>
<div class="t " style="right:327.90px;top:886.88px;font-size:15.5px;letter-spacing:.12px">4,760.00</div>
<div class="t " style="right:272.60px;top:888.15px;font-size:14px;letter-spacing:-.75px">USD</div>
<div class="t " style="right:138.90px;top:886.88px;font-size:15.5px;letter-spacing:.12px">3,706.80</div>
<div class="t " style="right:83.60px;top:888.15px;font-size:14px;letter-spacing:-.75px">USD</div>
<div class="t " style="left:107.30px;top:914.88px;font-size:15.5px;color:#0064d9;letter-spacing:.08px">419551</div>
<div class="t " style="right:1608.30px;top:914.88px;font-size:15.5px;letter-spacing:.13px">11/13/2024</div>
<div class="t " style="right:1479.90px;top:914.88px;font-size:15.5px;letter-spacing:.12px">6,216.00</div>
<div class="t " style="right:1424.60px;top:916.15px;font-size:14px;letter-spacing:-.75px">USD</div>
<div class="t " style="right:1285.90px;top:914.88px;font-size:15.5px;letter-spacing:.12px">3,210.86</div>
<div class="t " style="right:1230.60px;top:916.15px;font-size:14px;letter-spacing:-.75px">USD</div>
<div class="t " style="right:1101.90px;top:914.88px;font-size:15.5px;letter-spacing:.12px">3,005.14</div>
<div class="t " style="right:1046.60px;top:916.15px;font-size:14px;letter-spacing:-.75px">USD</div>
<div class="t " style="right:916.90px;top:914.88px;font-size:15.5px;letter-spacing:.12px">0.00</div>
<div class="t " style="right:861.60px;top:916.15px;font-size:14px;letter-spacing:-.75px">USD</div>
<div class="t " style="right:732.90px;top:914.88px;font-size:15.5px;letter-spacing:.12px">0.00</div>
<div class="t " style="right:677.60px;top:916.15px;font-size:14px;letter-spacing:-.75px">USD</div>
<div class="t " style="right:499.90px;top:914.88px;font-size:15.5px;letter-spacing:.12px">0.00</div>
<div class="t " style="right:444.60px;top:916.15px;font-size:14px;letter-spacing:-.75px">USD</div>
<div class="t " style="right:327.90px;top:914.88px;font-size:15.5px;letter-spacing:.12px">6,216.00</div>
<div class="t " style="right:272.60px;top:916.15px;font-size:14px;letter-spacing:-.75px">USD</div>
<div class="t " style="right:138.90px;top:914.88px;font-size:15.5px;letter-spacing:.12px">3,210.86</div>
<div class="t " style="right:83.60px;top:916.15px;font-size:14px;letter-spacing:-.75px">USD</div>
<div class="t " style="left:107.30px;top:942.88px;font-size:15.5px;color:#0064d9;letter-spacing:.08px">419036</div>
<div class="t " style="right:1608.30px;top:942.88px;font-size:15.5px;letter-spacing:.13px">11/08/2024</div>
<div class="t " style="right:1479.90px;top:942.88px;font-size:15.5px;letter-spacing:.12px">4,872.00</div>
<div class="t " style="right:1424.60px;top:944.15px;font-size:14px;letter-spacing:-.75px">USD</div>
<div class="t " style="right:1285.90px;top:942.88px;font-size:15.5px;letter-spacing:.12px">2,516.62</div>
<div class="t " style="right:1230.60px;top:944.15px;font-size:14px;letter-spacing:-.75px">USD</div>
<div class="t " style="right:1101.90px;top:942.88px;font-size:15.5px;letter-spacing:.12px">2,355.38</div>
<div class="t " style="right:1046.60px;top:944.15px;font-size:14px;letter-spacing:-.75px">USD</div>
<div class="t " style="right:916.90px;top:942.88px;font-size:15.5px;letter-spacing:.12px">0.00</div>
<div class="t " style="right:861.60px;top:944.15px;font-size:14px;letter-spacing:-.75px">USD</div>
<div class="t " style="right:732.90px;top:942.88px;font-size:15.5px;letter-spacing:.12px">0.00</div>
<div class="t " style="right:677.60px;top:944.15px;font-size:14px;letter-spacing:-.75px">USD</div>
<div class="t " style="right:499.90px;top:942.88px;font-size:15.5px;letter-spacing:.12px">0.00</div>
<div class="t " style="right:444.60px;top:944.15px;font-size:14px;letter-spacing:-.75px">USD</div>
<div class="t " style="right:327.90px;top:942.88px;font-size:15.5px;letter-spacing:.12px">4,872.00</div>
<div class="t " style="right:272.60px;top:944.15px;font-size:14px;letter-spacing:-.75px">USD</div>
<div class="t " style="right:138.90px;top:942.88px;font-size:15.5px;letter-spacing:.12px">2,516.62</div>
<div class="t " style="right:83.60px;top:944.15px;font-size:14px;letter-spacing:-.75px">USD</div>
<div class="t " style="left:107.30px;top:970.88px;font-size:15.5px;color:#0064d9;letter-spacing:.08px">419210</div>
<div class="t " style="right:1608.30px;top:970.88px;font-size:15.5px;letter-spacing:.13px">11/08/2024</div>
<div class="t " style="right:1479.90px;top:970.88px;font-size:15.5px;letter-spacing:.12px">70,425.00</div>
<div class="t " style="right:1424.60px;top:972.15px;font-size:14px;letter-spacing:-.75px">USD</div>
<div class="t " style="right:1285.90px;top:970.88px;font-size:15.5px;letter-spacing:.12px">37,939.95</div>
<div class="t " style="right:1230.60px;top:972.15px;font-size:14px;letter-spacing:-.75px">USD</div>
<div class="t " style="right:1101.90px;top:970.88px;font-size:15.5px;letter-spacing:.12px">32,485.05</div>
<div class="t " style="right:1046.60px;top:972.15px;font-size:14px;letter-spacing:-.75px">USD</div>
<div class="t " style="right:916.90px;top:970.88px;font-size:15.5px;letter-spacing:.12px">0.00</div>
<div class="t " style="right:861.60px;top:972.15px;font-size:14px;letter-spacing:-.75px">USD</div>
<div class="t " style="right:732.90px;top:970.88px;font-size:15.5px;letter-spacing:.12px">0.00</div>
<div class="t " style="right:677.60px;top:972.15px;font-size:14px;letter-spacing:-.75px">USD</div>
<div class="t " style="right:499.90px;top:970.88px;font-size:15.5px;letter-spacing:.12px">0.00</div>
<div class="t " style="right:444.60px;top:972.15px;font-size:14px;letter-spacing:-.75px">USD</div>
<div class="t " style="right:327.90px;top:970.88px;font-size:15.5px;letter-spacing:.12px">70,425.00</div>
<div class="t " style="right:272.60px;top:972.15px;font-size:14px;letter-spacing:-.75px">USD</div>
<div class="t " style="right:138.90px;top:970.88px;font-size:15.5px;letter-spacing:.12px">37,939.95</div>
<div class="t " style="right:83.60px;top:972.15px;font-size:14px;letter-spacing:-.75px">USD</div>
<div class="t " style="left:107.30px;top:998.88px;font-size:15.5px;color:#0064d9;letter-spacing:.08px">418867</div>
<div class="t " style="right:1608.30px;top:998.88px;font-size:15.5px;letter-spacing:.13px">11/08/2024</div>
<div class="t " style="right:1479.90px;top:998.88px;font-size:15.5px;letter-spacing:.12px">1,500.00</div>
<div class="t " style="right:1424.60px;top:1000.15px;font-size:14px;letter-spacing:-.75px">USD</div>
<div class="t " style="right:1285.90px;top:998.88px;font-size:15.5px;letter-spacing:.12px">817.20</div>
<div class="t " style="right:1230.60px;top:1000.15px;font-size:14px;letter-spacing:-.75px">USD</div>
<div class="t " style="right:1101.90px;top:998.88px;font-size:15.5px;letter-spacing:.12px">682.80</div>
<div class="t " style="right:1046.60px;top:1000.15px;font-size:14px;letter-spacing:-.75px">USD</div>
<div class="t " style="right:916.90px;top:998.88px;font-size:15.5px;letter-spacing:.12px">0.00</div>
<div class="t " style="right:861.60px;top:1000.15px;font-size:14px;letter-spacing:-.75px">USD</div>
<div class="t " style="right:732.90px;top:998.88px;font-size:15.5px;letter-spacing:.12px">0.00</div>
<div class="t " style="right:677.60px;top:1000.15px;font-size:14px;letter-spacing:-.75px">USD</div>
<div class="t " style="right:499.90px;top:998.88px;font-size:15.5px;letter-spacing:.12px">0.00</div>
<div class="t " style="right:444.60px;top:1000.15px;font-size:14px;letter-spacing:-.75px">USD</div>
<div class="t " style="right:327.90px;top:998.88px;font-size:15.5px;letter-spacing:.12px">1,500.00</div>
<div class="t " style="right:272.60px;top:1000.15px;font-size:14px;letter-spacing:-.75px">USD</div>
<div class="t " style="right:138.90px;top:998.88px;font-size:15.5px;letter-spacing:.12px">817.20</div>
<div class="t " style="right:83.60px;top:1000.15px;font-size:14px;letter-spacing:-.75px">USD</div>
<div class="t b" style="right:1479.90px;top:1026.79px;font-size:15.6px;letter-spacing:.1px">782,208,848.00</div>
<div class="t b" style="right:1424.60px;top:1027.98px;font-size:14.2px;letter-spacing:-.8px">USD</div>
<div class="t b" style="right:1285.90px;top:1026.79px;font-size:15.6px;letter-spacing:.1px">502,594,095.27</div>
<div class="t b" style="right:1230.60px;top:1027.98px;font-size:14.2px;letter-spacing:-.8px">USD</div>
<div class="t b" style="right:1101.90px;top:1026.79px;font-size:15.6px;letter-spacing:.1px">279,614,752.73</div>
<div class="t b" style="right:1046.60px;top:1027.98px;font-size:14.2px;letter-spacing:-.8px">USD</div>
<div class="t b" style="right:916.90px;top:1026.79px;font-size:15.6px;letter-spacing:.1px">602,221,681.00</div>
<div class="t b" style="right:861.60px;top:1027.98px;font-size:14.2px;letter-spacing:-.8px">USD</div>
<div class="t b" style="right:732.90px;top:1026.79px;font-size:15.6px;letter-spacing:.1px">387,047,373.24</div>
<div class="t b" style="right:677.60px;top:1027.98px;font-size:14.2px;letter-spacing:-.8px">USD</div>
<div class="t b" style="right:499.90px;top:1026.79px;font-size:15.6px;letter-spacing:.1px">1,934.98</div>
<div class="t b" style="right:444.60px;top:1027.98px;font-size:14.2px;letter-spacing:-.8px">USD</div>
<div class="t b" style="left:1495.40px;top:1026.79px;font-size:15.6px;letter-spacing:.1px">179,987,167....</div>
<div class="t b" style="right:272.60px;top:1027.98px;font-size:14.2px;letter-spacing:-.8px">USD</div>
<div class="t b" style="right:138.90px;top:1026.79px;font-size:15.6px;letter-spacing:.1px">115,546,722.03</div>
<div class="t b" style="right:83.60px;top:1027.98px;font-size:14.2px;letter-spacing:-.8px">USD</div>
<svg style="left:1850px;top:860px" width="12" height="10" viewBox="0 0 12 10"><path d="M1 7.6 L5.6 2.6 L10.2 7.6 Z" fill="#8596aa"/></svg>
<div class="abs" style="left:1848px;top:874px;width:16px;height:20.5px;background:#7b91a8"></div>
<svg style="left:1850px;top:1004.3px" width="12" height="10" viewBox="0 0 12 10"><path d="M1 3 L5.6 8 L10.2 3 Z" fill="#8596aa"/></svg>
<div class="abs" style="left:119px;top:1051px;width:1552px;height:16px;background:#7b91a8"></div>
<svg style="left:104px;top:1053px" width="10" height="12" viewBox="0 0 10 12"><path d="M7.6 1.4 L2.2 5.9 L7.6 10.4 Z" fill="#5b6f85"/></svg>
<svg style="left:1829px;top:1053px" width="10" height="12" viewBox="0 0 10 12"><path d="M3.4 1.4 L8.8 5.9 L3.4 10.4 Z" fill="#8596aa"/></svg>
<div class="abs" style="left:1919px;top:57px;width:80px;height:1200px;background:#cdced2;box-shadow:0 0 72px 20px rgba(15,15,25,.18);pointer-events:none"></div><div class="abs" style="left:1918.6px;top:1078.6px;width:2px;height:2px;background:#111"></div>
</div></body></html>
